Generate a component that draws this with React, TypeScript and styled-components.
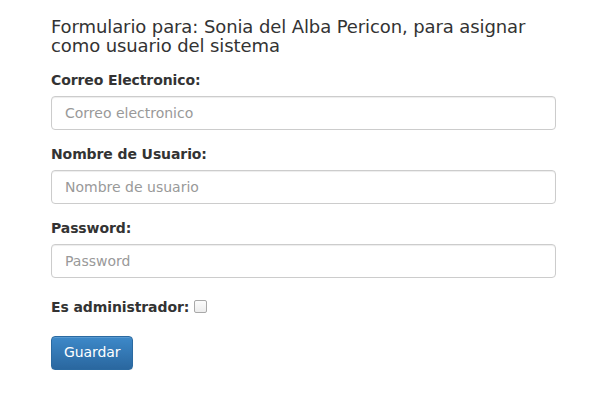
import React from "react";
import styled, { createGlobalStyle } from "styled-components";

const Global = createGlobalStyle`
  * { box-sizing: border-box; }
  body {
    margin: 0;
    background: #fff;
    font-family: "DejaVu Sans", sans-serif;
    font-size: 14px;
    line-height: 1.42857;
    color: #333;
  }
`;

const Page = styled.div`
  padding: 0 55px 0 51px;
`;

const Heading = styled.h4`
  font-size: 18px;
  font-weight: 500;
  line-height: 19px;
  margin: 17px 0 16px;
  color: #333;
  letter-spacing: -0.1px;
`;

const Group = styled.div<{ $top?: number; $gap?: number }>`
  padding-top: ${(p) => p.$top ?? 0}px;
  margin-bottom: ${(p) => p.$gap ?? 15}px;
`;

const Label = styled.label`
  display: inline-block;
  font-weight: bold;
  margin-bottom: 5px;
  max-width: 100%;
  letter-spacing: -0.1px;
`;

const Input = styled.input`
  display: block;
  width: 100%;
  height: 34px;
  padding: 6px 13px;
  font-family: "DejaVu Sans", sans-serif;
  font-size: 14px;
  line-height: 1.42857;
  color: #555;
  background: #fff;
  border: 1px solid #ccc;
  border-radius: 4px;
  box-shadow: inset 0 1px 1px rgba(0, 0, 0, 0.075);
  &::placeholder {
    color: #999;
  }
`;

const Check = styled.input`
  appearance: none;
  -webkit-appearance: none;
  display: inline-block;
  margin: 0 0 0 5px;
  vertical-align: -1px;
  width: 13px;
  height: 13px;
  border: 1px solid #a9a9a9;
  border-radius: 2px;
  background: linear-gradient(to bottom, #fcfcfc, #ececec);
`;

const Button = styled.button`
  display: inline-block;
  padding: 6px 12px;
  font-family: "DejaVu Sans", sans-serif;
  font-size: 14px;
  line-height: 1.42857;
  color: #fff;
  background-image: linear-gradient(to bottom, #3d89c9 0, #2a679f 100%);
  border: 1px solid #2b6aa1;
  border-radius: 4px;
  box-shadow: inset 0 1px 0 rgba(255, 255, 255, 0.15), 0 1px 1px rgba(0, 0, 0, 0.075);
  letter-spacing: -0.1px;
  cursor: pointer;
`;

export default function App() {
  return (
    <>
      <Global />
      <Page>
        <Heading>Formulario para: Sonia del Alba Pericon, para asignar como usuario del sistema</Heading>
        <Group>
          <Label>Correo Electronico:</Label>
          <Input placeholder="Correo electronico" />
        </Group>
        <Group>
          <Label>Nombre de Usuario:</Label>
          <Input placeholder="Nombre de usuario" />
        </Group>
        <Group>
          <Label>Password:</Label>
          <Input placeholder="Password" type="password" />
        </Group>
        <Group $top={5} $gap={13}>
          <Label>
            Es administrador:
            <Check type="checkbox" />
          </Label>
        </Group>
        <Button>Guardar</Button>
      </Page>
    </>
  );
}
